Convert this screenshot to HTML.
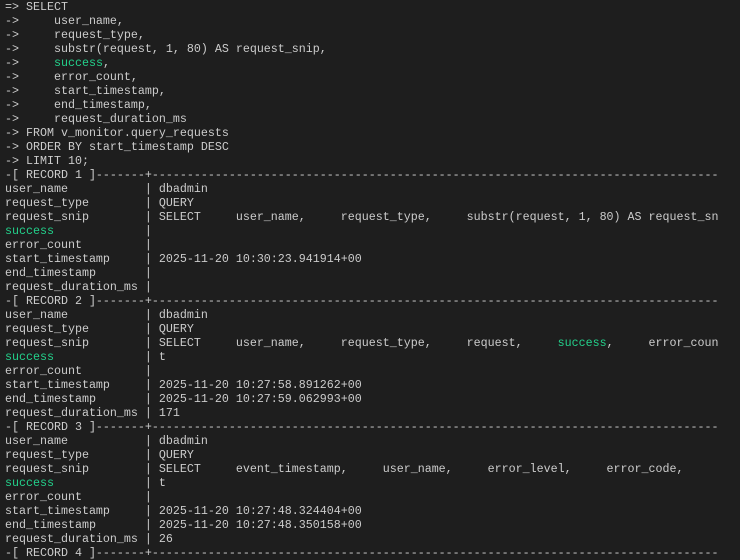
<!DOCTYPE html>
<html><head><meta charset="utf-8"><style>
html,body{margin:0;padding:0;background:#1e1e1e;width:740px;height:560px;overflow:hidden}
pre{margin:0;position:absolute;left:5px;top:0px;font-family:"Liberation Mono",monospace;font-size:11.67px;line-height:14px;color:#cccccc;white-space:pre}
.g{color:#23d18b}
</style></head><body><pre>=> SELECT
->     user_name,
->     request_type,
->     substr(request, 1, 80) AS request_snip,
->     <span class="g">success</span>,
->     error_count,
->     start_timestamp,
->     end_timestamp,
->     request_duration_ms
-> FROM v_monitor.query_requests
-> ORDER BY start_timestamp DESC
-> LIMIT 10;
-[ RECORD 1 ]-------+---------------------------------------------------------------------------------
user_name           | dbadmin
request_type        | QUERY
request_snip        | SELECT     user_name,     request_type,     substr(request, 1, 80) AS request_sn
<span class="g">success</span>             |
error_count         |
start_timestamp     | 2025-11-20 10:30:23.941914+00
end_timestamp       |
request_duration_ms |
-[ RECORD 2 ]-------+---------------------------------------------------------------------------------
user_name           | dbadmin
request_type        | QUERY
request_snip        | SELECT     user_name,     request_type,     request,     <span class="g">success</span>,     error_coun
<span class="g">success</span>             | t
error_count         |
start_timestamp     | 2025-11-20 10:27:58.891262+00
end_timestamp       | 2025-11-20 10:27:59.062993+00
request_duration_ms | 171
-[ RECORD 3 ]-------+---------------------------------------------------------------------------------
user_name           | dbadmin
request_type        | QUERY
request_snip        | SELECT     event_timestamp,     user_name,     error_level,     error_code,
<span class="g">success</span>             | t
error_count         |
start_timestamp     | 2025-11-20 10:27:48.324404+00
end_timestamp       | 2025-11-20 10:27:48.350158+00
request_duration_ms | 26
-[ RECORD 4 ]-------+---------------------------------------------------------------------------------
</pre></body></html>
